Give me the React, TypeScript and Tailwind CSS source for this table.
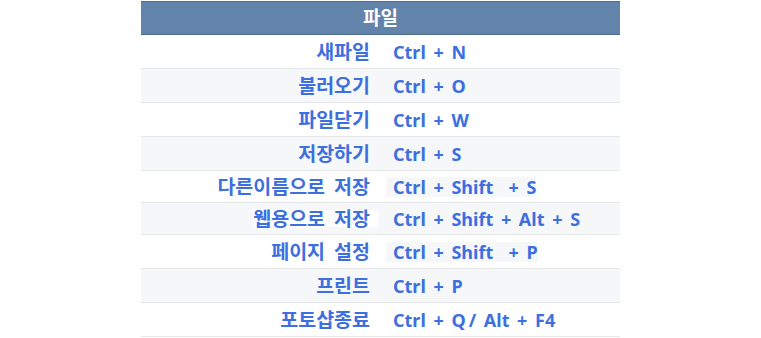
import React from "react";

type Row = {
  label: string;
  keys: string;
  gray: boolean;
  h: string;
  labelHl?: boolean;
  keysHl?: boolean;
};

const rows: Row[] = [
  { label: "새파일", keys: "Ctrl + N", gray: false, h: "h-[34px]" },
  { label: "불러오기", keys: "Ctrl + O", gray: true, h: "h-[34px]" },
  { label: "파일닫기", keys: "Ctrl + W", gray: false, h: "h-[34px]" },
  { label: "저장하기", keys: "Ctrl + S", gray: true, h: "h-[34px]" },
  { label: "다른이름으로 저장", keys: "Ctrl + Shift \u00a0+ S", gray: false, h: "h-[32px]", keysHl: true },
  { label: "웹용으로 저장", keys: "Ctrl + Shift + Alt + S", gray: true, h: "h-[32px]", labelHl: true },
  { label: "페이지 설정", keys: "Ctrl + Shift \u00a0+ P", gray: false, h: "h-[34px]", keysHl: true },
  { label: "프린트", keys: "Ctrl + P", gray: true, h: "h-[34px]" },
  { label: "포토샵종료", keys: "Ctrl + Q\u2009/ Alt + F4", gray: false, h: "h-[34px]" },
];

export default function App() {
  return (
    <div
      className="w-[761px] h-[338px] bg-white pt-px"
      style={{ fontFamily: '"Noto Sans", "Noto Sans CJK KR", sans-serif' }}
    >
      <div className="mx-auto w-[479px]">
        <div className="h-[34px] bg-[#6384aa] border-t border-b border-[#4e6b90] flex items-center justify-center text-white font-bold text-[19px]">
          파일
        </div>
        {rows.map((r) => (
          <div
            key={r.label}
            className={`flex border-b border-[#e6e7e9] font-bold text-[#3d6fdf] ${r.h} ${
              r.gray ? "bg-[#f6f7f9]" : "bg-white"
            }`}
          >
            <div className="w-[240px] flex items-center justify-end pr-[11px] text-[19.5px] [word-spacing:4px]">
              {r.labelHl ? (
                <span className="bg-white h-[17px] flex items-center pr-[8px] -mr-[8px] leading-none">
                  {r.label}
                </span>
              ) : (
                <span className="leading-none">{r.label}</span>
              )}
            </div>
            <div className="flex-1 flex items-center pl-[5px] text-[18px] [word-spacing:3px]">
              {r.keysHl ? (
                <span className="bg-[#f6f7f9] h-[20px] flex items-center pl-[7px] whitespace-pre leading-none">
                  {r.keys}
                </span>
              ) : (
                <span className="pl-[7px] whitespace-pre leading-none">{r.keys}</span>
              )}
            </div>
          </div>
        ))}
      </div>
    </div>
  );
}
